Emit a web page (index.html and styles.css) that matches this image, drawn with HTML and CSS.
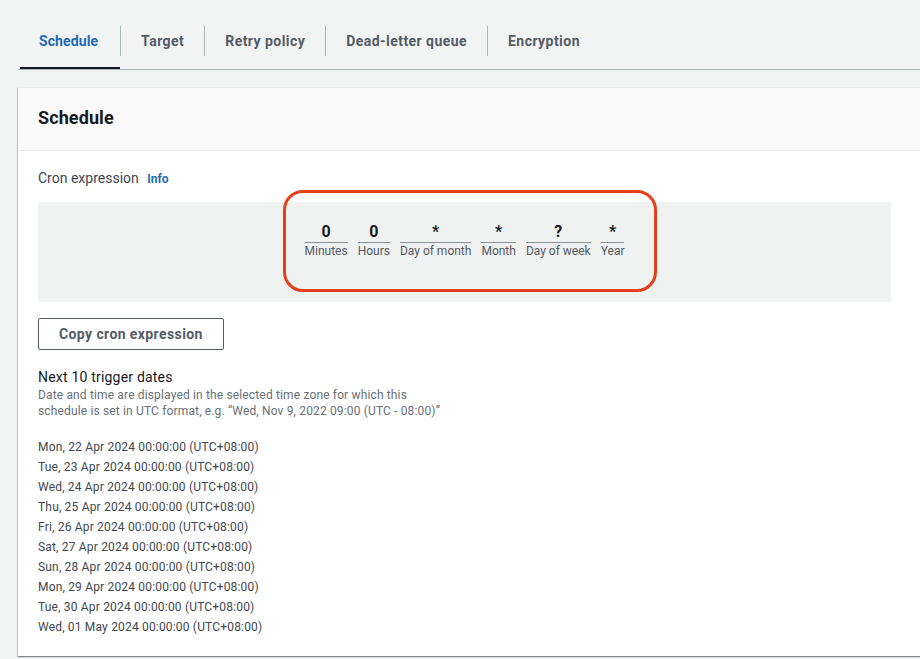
FILE: index.html
```html
<!DOCTYPE html>
<html>
<head>
<meta charset="utf-8">
<link rel="stylesheet" href="styles.css">
</head>
<body>
<div class="page">
  <div class="tabs">
    <div class="tab active"><span class="tab-label">Schedule</span></div>
    <div class="tab"><span class="tab-label">Target</span></div>
    <div class="tab"><span class="tab-label">Retry policy</span></div>
    <div class="tab"><span class="tab-label">Dead-letter queue</span></div>
    <div class="tab"><span class="tab-label">Encryption</span></div>
  </div>

  <div class="panel">
    <div class="panel-header"><h2 class="panel-title">Schedule</h2></div>
    <div class="panel-body">
      <div class="field-label">Cron expression <a class="info">Info</a></div>
      <div class="cron-wrap">
        <div class="cron-box">
          <div class="cron-fields">
            <div class="cron-field"><div class="cron-value">0</div><div class="cron-name">Minutes</div></div>
            <div class="cron-field"><div class="cron-value">0</div><div class="cron-name">Hours</div></div>
            <div class="cron-field"><div class="cron-value">*</div><div class="cron-name">Day of month</div></div>
            <div class="cron-field"><div class="cron-value">*</div><div class="cron-name">Month</div></div>
            <div class="cron-field"><div class="cron-value">?</div><div class="cron-name">Day of week</div></div>
            <div class="cron-field"><div class="cron-value">*</div><div class="cron-name">Year</div></div>
          </div>
        </div>
        <div class="highlight"></div>
      </div>
      <button class="btn">Copy cron expression</button>
      <div class="next-title">Next 10 trigger dates</div>
      <div class="next-desc">Date and time are displayed in the selected time zone for which this<br>schedule is set in UTC format, e.g. “Wed, Nov 9, 2022 09:00 (UTC - 08:00)”</div>
      <ul class="dates">
        <li>Mon, 22 Apr 2024 00:00:00 (UTC+08:00)</li>
        <li>Tue, 23 Apr 2024 00:00:00 (UTC+08:00)</li>
        <li>Wed, 24 Apr 2024 00:00:00 (UTC+08:00)</li>
        <li>Thu, 25 Apr 2024 00:00:00 (UTC+08:00)</li>
        <li>Fri, 26 Apr 2024 00:00:00 (UTC+08:00)</li>
        <li>Sat, 27 Apr 2024 00:00:00 (UTC+08:00)</li>
        <li>Sun, 28 Apr 2024 00:00:00 (UTC+08:00)</li>
        <li>Mon, 29 Apr 2024 00:00:00 (UTC+08:00)</li>
        <li>Tue, 30 Apr 2024 00:00:00 (UTC+08:00)</li>
        <li>Wed, 01 May 2024 00:00:00 (UTC+08:00)</li>
      </ul>
    </div>
  </div>
</div>
</body>
</html>
```

FILE: styles.css
```css
html, body {
  margin: 0;
  padding: 0;
}
body {
  background: #f2f3f3;
  font-family: Roboto, "Liberation Sans", Arial, sans-serif;
  color: #16191f;
  overflow: hidden;
  width: 920px;
  height: 659px;
}
.page {
  padding: 18px 0 0 18px;
}
.tabs {
  display: flex;
  padding-left: 2px;
  border-bottom: 1px solid #aab7b8;
  width: 1000px;
}
.tab {
  position: relative;
  padding: 8px 0 13px;
}
.tab-label {
  display: block;
  padding: 0 20px;
  line-height: 30px;
  font-size: 14px;
  font-weight: 700;
  letter-spacing: 0.45px;
  color: #545b64;
  border-left: 1px solid #aab7b8;
}
.tab:first-child .tab-label {
  border-left: none;
  padding-left: 19px;
  padding-right: 22px;
  letter-spacing: 0.1px;
}
.tab.active .tab-label {
  color: #1f69b8;
}
.tab.active::after {
  content: "";
  position: absolute;
  left: 0;
  right: 0;
  bottom: 0;
  height: 2px;
  background: #16191f;
}
.panel {
  margin-top: 17px;
  width: 1000px;
  background: #fff;
  border-top: 1px solid #eaeded;
  box-shadow: 0 1px 1px 0 rgba(0,28,36,.3), 1px 1px 1px 0 rgba(0,28,36,.15), -1px 1px 1px 0 rgba(0,28,36,.15);
}
.panel-header {
  background: #fafafa;
  border-bottom: 1px solid #eaeded;
  padding: 19px 20px 21px;
}
.panel-title {
  margin: 0;
  font-size: 18px;
  line-height: 22px;
  font-weight: 700;
  letter-spacing: 0.1px;
  color: #16191f;
}
.panel-body {
  padding: 17px 20px 19px;
}
.field-label {
  font-size: 14px;
  line-height: 20px;
  color: #414750;
}
.info {
  margin-left: 5px;
  font-size: 12px;
  font-weight: 700;
  color: #1f69b8;
}
.cron-wrap {
  position: relative;
  margin-top: 13px;
  width: 853px;
}
.cron-box {
  background: #f0f1f1;
  padding: 20px 0 43px;
}
.cron-fields {
  display: flex;
  justify-content: center;
  gap: 10px;
}
.cron-field {
  display: flex;
  flex-direction: column;
  align-items: stretch;
  text-align: center;
}
.cron-value {
  font-size: 16px;
  font-weight: 700;
  line-height: 20px;
  color: #16191f;
}
.cron-name {
  border-top: 1px solid #879196;
  font-size: 12px;
  line-height: 16px;
  color: #545b64;
}
.highlight {
  position: absolute;
  left: 245px;
  top: -12px;
  width: 368px;
  height: 96px;
  border: 3px solid #e5401a;
  border-radius: 20px;
}
.btn {
  display: block;
  margin-top: 16px;
  height: 32px;
  padding: 0 20px;
  background: #fff;
  border: 1px solid #545b64;
  border-radius: 2px;
  font-family: inherit;
  font-size: 14px;
  font-weight: 700;
  letter-spacing: 0.4px;
  color: #545b64;
}
.next-title {
  margin-top: 17px;
  font-size: 14px;
  line-height: 20px;
  letter-spacing: 0.2px;
  color: #16191f;
}
.next-desc {
  font-size: 12px;
  line-height: 16px;
  letter-spacing: 0.15px;
  color: #687078;
}
.dates {
  list-style: none;
  margin: 18px 0 0;
  padding: 0;
}
.dates li {
  font-size: 12px;
  line-height: 20px;
  letter-spacing: 0.18px;
  color: #414750;
}
```
